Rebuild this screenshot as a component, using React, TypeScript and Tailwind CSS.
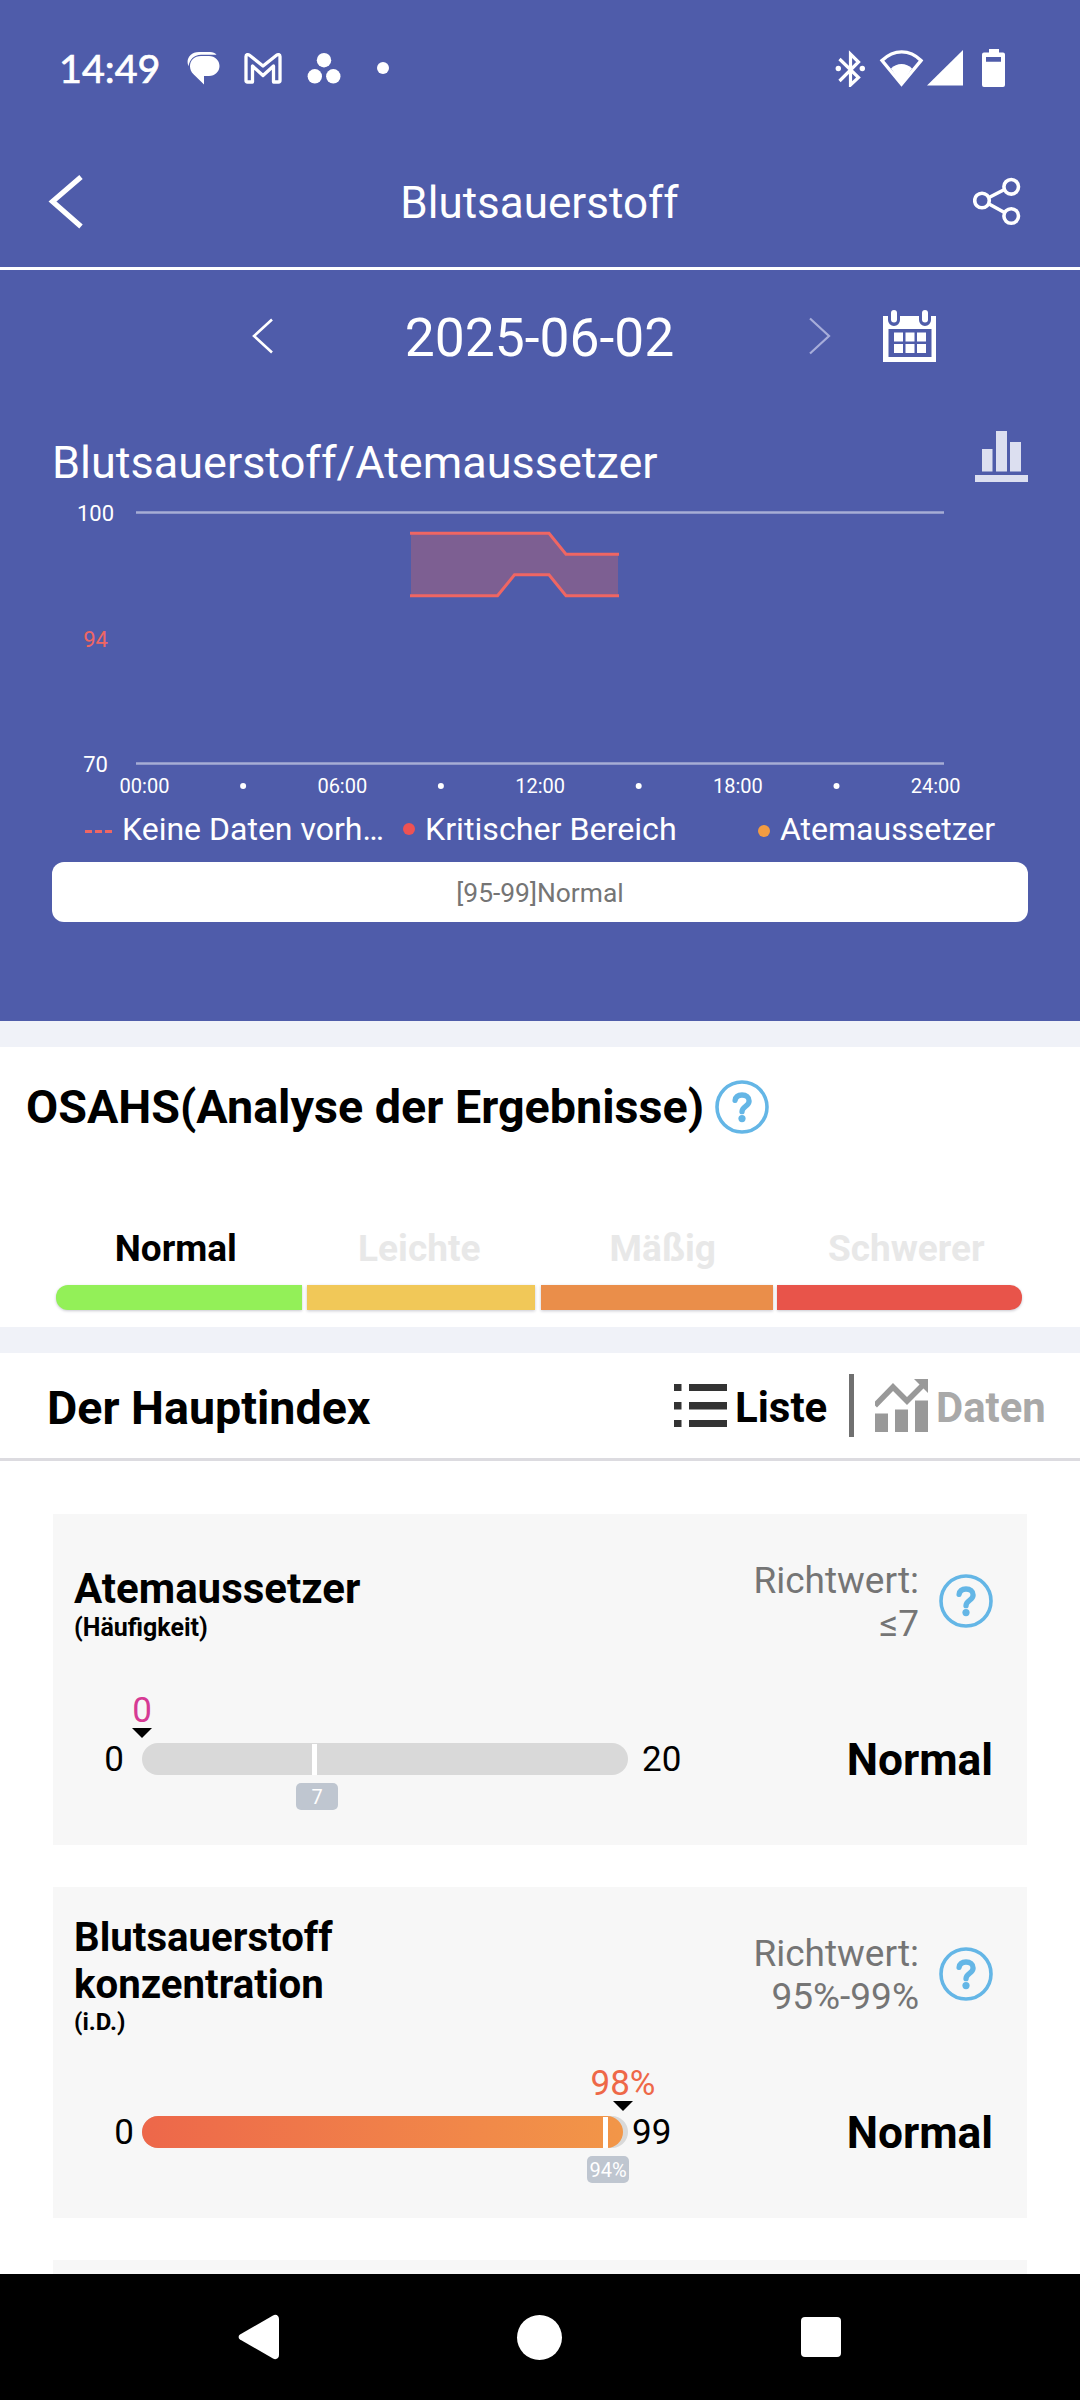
import { clsx } from 'clsx';

interface GaugeProps {
  min: string;
  max: string;
  value: string;
  valueClass: string;
  valueX: number;
  fill: number;
  limit: string;
  limitX: number;
  minGap: string;
  maxGap: string;
}

interface MetricCardProps {
  title: string[];
  subtitle: string;
  reference: string;
  status: string;
  headerClass: string;
  titleClass: string;
  subtitleClass: string;
  gauge: GaugeProps;
}

const levels = [
  { label: 'Normal', active: true },
  { label: 'Leichte', active: false },
  { label: 'Mäßig', active: false },
  { label: 'Schwerer', active: false },
];

const hours = ['00:00', '', '06:00', '', '12:00', '', '18:00', '', '24:00'];

const metrics: MetricCardProps[] = [
  {
    title: ['Atemaussetzer'],
    subtitle: '(Häufigkeit)',
    reference: '≤7',
    status: 'Normal',
    headerClass: 'pt-[51px]',
    titleClass: 'text-[42px]',
    subtitleClass: 'mt-[2px] text-[25px]',
    gauge: {
      min: '0',
      max: '20',
      value: '0',
      valueClass: 'text-[#d63a94]',
      valueX: 0,
      fill: 0,
      limit: '7',
      limitX: 172,
      minGap: 'pr-[18px]',
      maxGap: 'pl-[14px]',
    },
  },
  {
    title: ['Blutsauerstoff', 'konzentration'],
    subtitle: '(i.D.)',
    reference: '95%-99%',
    status: 'Normal',
    headerClass: 'pt-[27px]',
    titleClass: 'text-[40.200px]',
    subtitleClass: 'text-[24px]',
    gauge: {
      min: '0',
      max: '99',
      value: '98%',
      valueClass: 'text-[#ee6848]',
      valueX: 481,
      fill: 481,
      limit: '94%',
      limitX: 463,
      minGap: 'pr-[8px]',
      maxGap: 'pl-[4px]',
    },
  },
];

function HelpIcon() {
  return (
    <svg className="size-[54px] shrink-0" viewBox="0 0 54 54" fill="none" stroke="#64b6e6">
      <circle cx="27" cy="27" r="25" strokeWidth="3.6" />
      <path
        d="M20.100 20.400c.6-3.700 3.400-5.400 6.900-5.400 4.200 0 7.100 2.300 7.100 5.900 0 5.700-7.100 5.200-7.100 10.800"
        strokeWidth="5.300"
        strokeLinecap="round"
      />
      <circle cx="27" cy="38.600" r="3.600" fill="#64b6e6" stroke="none" />
    </svg>
  );
}

function StatusBar() {
  return (
    <div className="flex h-[136px] items-center pl-[59px] pr-[75px]">
      <span className="w-[128px] font-['Lato',sans-serif] text-[39.500px] leading-[48px] [-webkit-text-stroke:0.700px_white]">
        14:49
      </span>
      <svg className="h-[34px] w-[33px]" viewBox="187 53 33 34" fill="#fff">
        <path d="M199 54h11c3 0 5 1 6.500 2.700H201c-7 0-11.500 5-12.500 11.500-3-6.500 1.500-14.200 10.500-14.200z" />
        <path d="M201 58h8c6 0 10.500 4.500 10.500 10s-4.500 10-10.500 10h-5v8.500l-10.500-10.300c-7-7-3-18.200 7.500-18.200z" />
      </svg>
      <svg className="ml-[23px] h-[32px] w-[40px]" viewBox="243 53 40 32" fill="none" stroke="#fff" strokeWidth="3.300" strokeLinejoin="round">
        <path d="M246 81.500V57.500c0-2 2-2.500 3.500-1.300L263 67l13.500-10.800c1.500-1.200 3.500-.700 3.500 1.300v24c0 1-.5 1.500-1.500 1.500h-5V67L263 76.500 252.500 67v16h-5c-1 0-1.500-.5-1.500-1.500z" />
      </svg>
      <svg className="ml-[23px] h-[32px] w-[36px]" viewBox="305 53 36 32" fill="#fff">
        <circle cx="323" cy="61.200" r="7.200" />
        <circle cx="313.800" cy="77.300" r="7.200" />
        <circle cx="332.300" cy="77.300" r="7.200" />
      </svg>
      <span className="ml-[35px] size-[12px] rounded-full bg-white" />

      <svg className="ml-auto h-[38px] w-[170px]" viewBox="835 49 170 38" fill="#fff">
        <path d="M839.500 59l19 18.500-8 7.500V54l8 8-19 19" fill="none" stroke="#fff" strokeWidth="3.200" />
        <circle cx="838.300" cy="68.500" r="2.700" />
        <circle cx="862.300" cy="68.500" r="2.700" />
        <path d="M882 60.500c12-11.500 27.500-11.500 39 0L901.500 84z" fill="none" stroke="#fff" strokeWidth="3.400" />
        <path d="M891 68.500c5.500-6 15.500-6 21 0L901.500 84z" />
        <path d="M927 85.500L963 50v35.500z" />
        <path
          fillRule="evenodd"
          d="M989 49h10v3.500h4a2 2 0 0 1 2 2V85a2 2 0 0 1-2 2h-19a2 2 0 0 1-2-2V54.500a2 2 0 0 1 2-2h5zM986 57v4.800h15V57z"
        />
      </svg>
    </div>
  );
}

function TitleBar() {
  return (
    <header className="flex h-[134px] items-center justify-between border-b-[3px] border-white pl-[48px] pr-[59px]">
      <svg className="h-[56px] w-[48px]" viewBox="48 173 48 56" fill="none" stroke="#fff" strokeWidth="5.200">
        <path d="M81 176L52.500 200.500l28.500 25" />
      </svg>
      <h1 className="ml-[10px] mt-[2px] text-[44px] leading-[52px]">Blutsauerstoff</h1>
      <svg className="h-[50px] w-[48px]" viewBox="973 177 48 50" fill="none" stroke="#fff" strokeWidth="3.600">
        <circle cx="982" cy="200.500" r="7.300" />
        <circle cx="1011.200" cy="186.800" r="7.300" />
        <circle cx="1011.200" cy="216" r="7.300" />
        <path d="M989 197.500l15.500-8M989 204l15.500 8.500" />
      </svg>
    </header>
  );
}

function DatePicker() {
  return (
    <div className="flex h-[134px] items-center pl-[252px]">
      <svg className="mt-[-2px] h-[36px] w-[21px]" viewBox="0 0 21 36" fill="none" stroke="#fff" strokeWidth="2.600">
        <path d="M20 1.500L2 18l18 16.500" />
      </svg>
      <span className="mt-[2px] w-[533px] text-center text-[53.400px] leading-[60px]">2025-06-02</span>
      <svg className="ml-[3px] mt-[-2px] h-[38px] w-[22px]" viewBox="0 0 22 38" fill="none" stroke="#a7adda" strokeWidth="2.200">
        <path d="M1 1.500L20 19 1 36.500" />
      </svg>
      <svg className="ml-[52px] mt-[-3px] h-[52px] w-[53px]" viewBox="0 0 53 52">
        <path d="M0 6h53v46H0z" fill="#fff" />
        <path d="M5 4h12v6a6 6 0 0 1-12 0zM36 4h12v6a6 6 0 0 1-12 0z" fill="#4f5caa" />
        <rect x="8" y="0" width="6" height="12.500" rx="3" fill="#fff" />
        <rect x="39" y="0" width="6" height="12.500" rx="3" fill="#fff" />
        <path d="M5.500 19h43v28h-43z" fill="#4f5caa" />
        <path
          d="M11 22.500h9v9h-9zM22.500 22.500h9v9h-9zM34 22.500h9v9h-9zM11 34h9v9h-9zM22.500 34h9v9h-9zM34 34h9v9h-9z"
          fill="#fff"
        />
      </svg>
    </div>
  );
}

function OxygenChart() {
  return (
    <svg className="h-[314px] w-full" viewBox="0 491 1080 314">
      <path d="M136 512.500h808M136 763.500h808" stroke="#a7add5" strokeWidth="2.400" />
      <path
        d="M411 533.300H549L566 554.300H618V595.800H566L549 574.800H514.500L497.500 595.800H411z"
        fill="#7d5f92"
      />
      <path
        d="M410 533.300H549L566 554.300H619M410 595.800H497.500L514.500 574.800H549L566 595.800H619"
        fill="none"
        stroke="#ef6663"
        strokeWidth="3"
      />
      <g fontSize="22" textAnchor="middle" fill="#fff">
        <text x="95.500" y="520.500">100</text>
        <text x="95.500" y="646.500" fill="#ef6663">94</text>
        <text x="95.500" y="771.500">70</text>
      </g>
      <g fontSize="20" textAnchor="middle" fill="#fff">
        {hours.map((hour, i) =>
          hour ? (
            <text key={i} x={144.5 + i * 98.9} y="793">{hour}</text>
          ) : (
            <circle key={i} cx={144.2 + i * 98.9} cy="786" r="3" />
          )
        )}
      </g>
    </svg>
  );
}

function ChartLegend() {
  return (
    <div className="mb-[10px] flex h-[47px] items-center pl-[85px] text-[32px] leading-[40px]">
      <span className="flex w-[37px] gap-[3px] pt-[6px]">
        <i className="h-[3px] w-[7px] bg-[#ef6663]" />
        <i className="h-[3px] w-[7px] bg-[#ef6663]" />
        <i className="h-[3px] w-[7px] bg-[#ef6663]" />
      </span>
      <span className="w-[281px] whitespace-nowrap">Keine Daten vorh…</span>
      <span className="mr-[10px] size-[12px] rounded-full bg-[#ee5253]" />
      <span className="w-[333px] whitespace-nowrap text-[32.200px]">Kritischer Bereich</span>
      <span className="mr-[10px] mt-[5px] size-[12px] rounded-full bg-[#f39c41]" />
      <span>Atemaussetzer</span>
    </div>
  );
}

function Gauge({ min, max, value, valueClass, valueX, fill, limit, limitX, minGap, maxGap }: GaugeProps) {
  return (
    <div className="flex h-[32px] items-center text-[35px] leading-[40px]">
      <span className={clsx('mt-[2px] w-[89px] text-right', minGap)}>{min}</span>
      <div className="relative h-[32px] w-[486px] rounded-full bg-[#d9d9d9]">
        <div
          className="h-full rounded-full bg-linear-to-r from-[#ed674a] to-[#f29648]"
          style={{ width: fill }}
        />
        <span
          className={clsx('absolute top-[-52px] -translate-x-1/2', valueClass)}
          style={{ left: valueX }}
        >
          {value}
        </span>
        <svg
          className="absolute top-[-15px] h-[10px] w-[20px] -translate-x-1/2"
          style={{ left: valueX }}
          viewBox="0 0 20 10"
        >
          <path d="M0 0h20L10 10z" />
        </svg>
        <i className="absolute top-px h-[31px] w-[5px] bg-white" style={{ left: limitX - 2 }} />
        <span
          className="absolute top-[40px] flex h-[27px] w-[42px] -translate-x-1/2 items-center justify-center rounded-[5px] bg-[#bfc6d0] text-[20px] leading-[27px] text-white"
          style={{ left: limitX + 3 }}
        >
          <span className="mt-px">{limit}</span>
        </span>
      </div>
      <span className={clsx('mt-[2px]', maxGap)}>{max}</span>
    </div>
  );
}

function MetricCard({
  title,
  subtitle,
  reference,
  status,
  headerClass,
  titleClass,
  subtitleClass,
  gauge,
}: MetricCardProps) {
  return (
    <div className="h-[331px] bg-[#f7f7f7] pr-[35px]">
      <div className="flex h-[229px] justify-between">
        <div className={clsx('pl-[21px]', headerClass)}>
          {title.map((line) => (
            <h3 key={line} className={clsx('font-bold leading-[47px]', titleClass)}>{line}</h3>
          ))}
          <p className={clsx('font-bold leading-[28px]', subtitleClass)}>{subtitle}</p>
        </div>
        <div className="flex items-start">
          <div className="mr-[20px] pt-[45px] text-right text-[37px] leading-[43px] text-[#757575]">
            <p>Richtwert:</p>
            <p>{reference}</p>
          </div>
          <div className="-mr-px pt-[60px]">
            <HelpIcon />
          </div>
        </div>
      </div>
      <div className="flex items-start justify-between">
        <Gauge {...gauge} />
        <span className="-mr-px mt-px text-[44.300px] font-bold leading-[32px]">{status}</span>
      </div>
    </div>
  );
}

function NavigationBar() {
  return (
    <nav className="flex h-[126px] items-center bg-black pl-[238px]">
      <svg className="h-[46px] w-[43px]" viewBox="0 0 43 46" fill="#fff">
        <path d="M2 20.500L35 1.500c3-1.700 6 .2 6 3.500v36c0 3.300-3 5.200-6 3.500L2 25.500c-1.800-1.200-1.800-3.800 0-5z" />
      </svg>
      <span className="ml-[236px] size-[45px] rounded-full bg-white" />
      <span className="ml-[239px] size-[40px] rounded-[4px] bg-white" />
    </nav>
  );
}

export default function App() {
  return (
    <div className="flex h-[2400px] w-[1080px] flex-col overflow-hidden bg-white font-['Roboto',sans-serif] text-black">
      <section className="h-[1021px] shrink-0 bg-[#4f5caa] text-white">
        <StatusBar />
        <TitleBar />
        <DatePicker />
        <div className="flex h-[87px] items-start justify-between pl-[52px] pr-[52px]">
          <h2 className="pt-[33px] text-[45px] leading-[52px]">Blutsauerstoff/Atemaussetzer</h2>
          <svg className="mt-[27px] h-[51px] w-[53px]" viewBox="0 0 53 51" fill="#dcdff0">
            <path d="M7 18h10.500v22.500H7zM21 0h11v40.500H21zM35 11h11v29.500H35zM0 44h53v7H0z" />
          </svg>
        </div>
        <OxygenChart />
        <ChartLegend />
        <div className="mx-[52px] h-[60px] rounded-[12px] bg-white text-center text-[26.400px] leading-[63px] text-[#757575]">
          [95-99]Normal
        </div>
      </section>

      <section className="h-[332px] shrink-0 border-y-[26px] border-[#f0f2f8]">
        <div className="flex h-[120px] items-center gap-[11px] pl-[26px]">
          <h2 className="text-[46.700px] font-bold leading-[54px]">OSAHS(Analyse der Ergebnisse)</h2>
          <HelpIcon />
        </div>
        <div className="ml-[54px] mr-[52px] grid grid-cols-4 pt-[61px] text-center text-[37px] font-bold leading-[42px]">
          {levels.map(({ label, active }) => (
            <span key={label} className={active ? 'text-black' : 'text-[#e8e8e8]'}>{label}</span>
          ))}
        </div>
        <div className="ml-[56px] mt-[15px] flex h-[25px]">
          <div className="mr-[5px] w-[246px] rounded-l-[12px] bg-[#93f058] shadow-[0_1px_3px_#c8c8d0]" />
          <div className="mr-[6px] w-[228px] bg-[#f1c858] shadow-[0_1px_3px_#c8c8d0]" />
          <div className="mr-[4px] w-[232px] bg-[#ea8e4a] shadow-[0_1px_3px_#c8c8d0]" />
          <div className="w-[245px] rounded-r-[12px] bg-[#e8544a] shadow-[0_1px_3px_#c8c8d0]" />
        </div>
      </section>

      <section className="flex min-h-0 flex-1 flex-col overflow-hidden">
        <div className="flex h-[108px] shrink-0 items-center border-b-[3px] border-[#dcdbe0] pl-[47px]">
          <h2 className="mt-[4px] w-[627px] text-[46.600px] font-bold leading-[50px]">Der Hauptindex</h2>
          <svg className="h-[43px] w-[53px]" viewBox="0 0 53 43" fill="#333">
            <path d="M0 0h7.500v7H0zM15 0h38v7H15zM0 18h7.500v7.500H0zM15 18h38v7.500H15zM0 36h7.500v7H0zM15 36h38v7H15z" />
          </svg>
          <span className="ml-[8px] mt-[4px] w-[114px] text-[42px] font-bold leading-[48px]">Liste</span>
          <i className="h-[63px] w-[5px] bg-[#707070]" />
          <svg className="ml-[21px] h-[53px] w-[53px]" viewBox="0 0 53 53" fill="#999">
            <path d="M0 34.500h13V53H0zM20 30.500h13V53H20zM40 21.500h13V53H40z" />
            <path d="M0 26.500L18 8l14 14L48 6" fill="none" stroke="#999" strokeWidth="5.500" />
            <path d="M39 0h14v14z" />
          </svg>
          <span className="ml-[8px] mt-[4px] text-[41.800px] font-bold leading-[48px] text-[#a9a9a9]">Daten</span>
        </div>
        <div className="flex flex-col gap-[42px] pl-[53px] pr-[53px] pt-[53px]">
          {metrics.map((metric) => (
            <MetricCard key={metric.title[0]} {...metric} />
          ))}
          <div className="h-[331px] bg-[#f7f7f7]" />
        </div>
      </section>

      <NavigationBar />
    </div>
  );
}
